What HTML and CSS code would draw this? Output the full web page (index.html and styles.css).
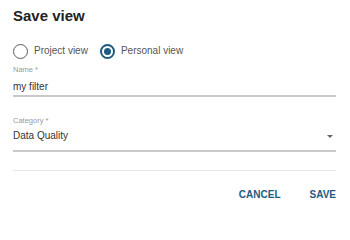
FILE: index.html
```html
<!DOCTYPE html>
<html>
<head>
<meta charset="utf-8">
<link rel="stylesheet" href="styles.css">
</head>
<body>
<div class="dialog">
  <h1 class="title">Save view</h1>
  <div class="radios">
    <label class="radio">
      <span class="circle"></span>
      <span class="radio-text">Project view</span>
    </label>
    <label class="radio">
      <span class="circle checked"></span>
      <span class="radio-text">Personal view</span>
    </label>
  </div>
  <div class="field">
    <div class="field-label">Name *</div>
    <div class="field-value">my filter</div>
  </div>
  <div class="field field-select">
    <div class="field-label">Category *</div>
    <div class="field-value select-row">
      <span>Data Quality</span>
      <span class="arrow"></span>
    </div>
  </div>
  <div class="divider"></div>
  <div class="actions">
    <button class="btn">CANCEL</button>
    <button class="btn">SAVE</button>
  </div>
</div>
</body>
</html>
```
FILE: styles.css
```css
html, body {
  margin: 0;
  padding: 0;
  background: #ffffff;
}
body {
  font-family: "Liberation Sans", Arial, sans-serif;
  color: #333333;
}
.dialog {
  width: 350px;
  height: 207px;
  box-sizing: border-box;
  padding: 0 14px 0 13px;
}
.title {
  margin: 7px 0 0 0;
  font-size: 15px;
  line-height: 17px;
  font-weight: bold;
  color: #222222;
}
.radios {
  display: flex;
  align-items: center;
  gap: 12px;
  margin-top: 19px;
  height: 16px;
}
.radio {
  display: flex;
  align-items: center;
  gap: 6px;
}
.circle {
  width: 15px;
  height: 15px;
  box-sizing: border-box;
  border: 1.5px solid #5a5a5a;
  border-radius: 50%;
  display: flex;
  align-items: center;
  justify-content: center;
}
.circle.checked {
  border: 2px solid #1d5b80;
}
.circle.checked::after {
  content: "";
  width: 7px;
  height: 7px;
  border-radius: 50%;
  background: #1d5b80;
}
.radio-text {
  font-size: 10px;
  line-height: 12px;
  color: #555555;
}
.field {
  margin-top: 6px;
  border-bottom: 2px solid #c9c9c9;
  padding-bottom: 2px;
}
.field-label {
  font-size: 7.5px;
  line-height: 9px;
  color: #9a9a9a;
}
.field-value {
  margin-top: 7px;
  font-size: 10px;
  line-height: 12px;
  color: #333333;
}
.field-select {
  margin-top: 19px;
  padding-bottom: 8px;
}
.field-select .field-value {
  margin-top: 5px;
}
.select-row {
  display: flex;
  align-items: center;
  justify-content: space-between;
}
.arrow {
  width: 0;
  height: 0;
  border-left: 3px solid transparent;
  border-right: 3px solid transparent;
  border-top: 3px solid #666666;
  margin-right: 3px;
}
.divider {
  margin-top: 18px;
  height: 1px;
  background: #e8e8e8;
}
.actions {
  display: flex;
  justify-content: flex-end;
  gap: 29px;
  margin-top: 18px;
}
.btn {
  border: none;
  background: none;
  padding: 0;
  margin: 0;
  font-family: "Liberation Sans", Arial, sans-serif;
  font-size: 10px;
  line-height: 12px;
  font-weight: bold;
  color: #1d5b80;
}
```
